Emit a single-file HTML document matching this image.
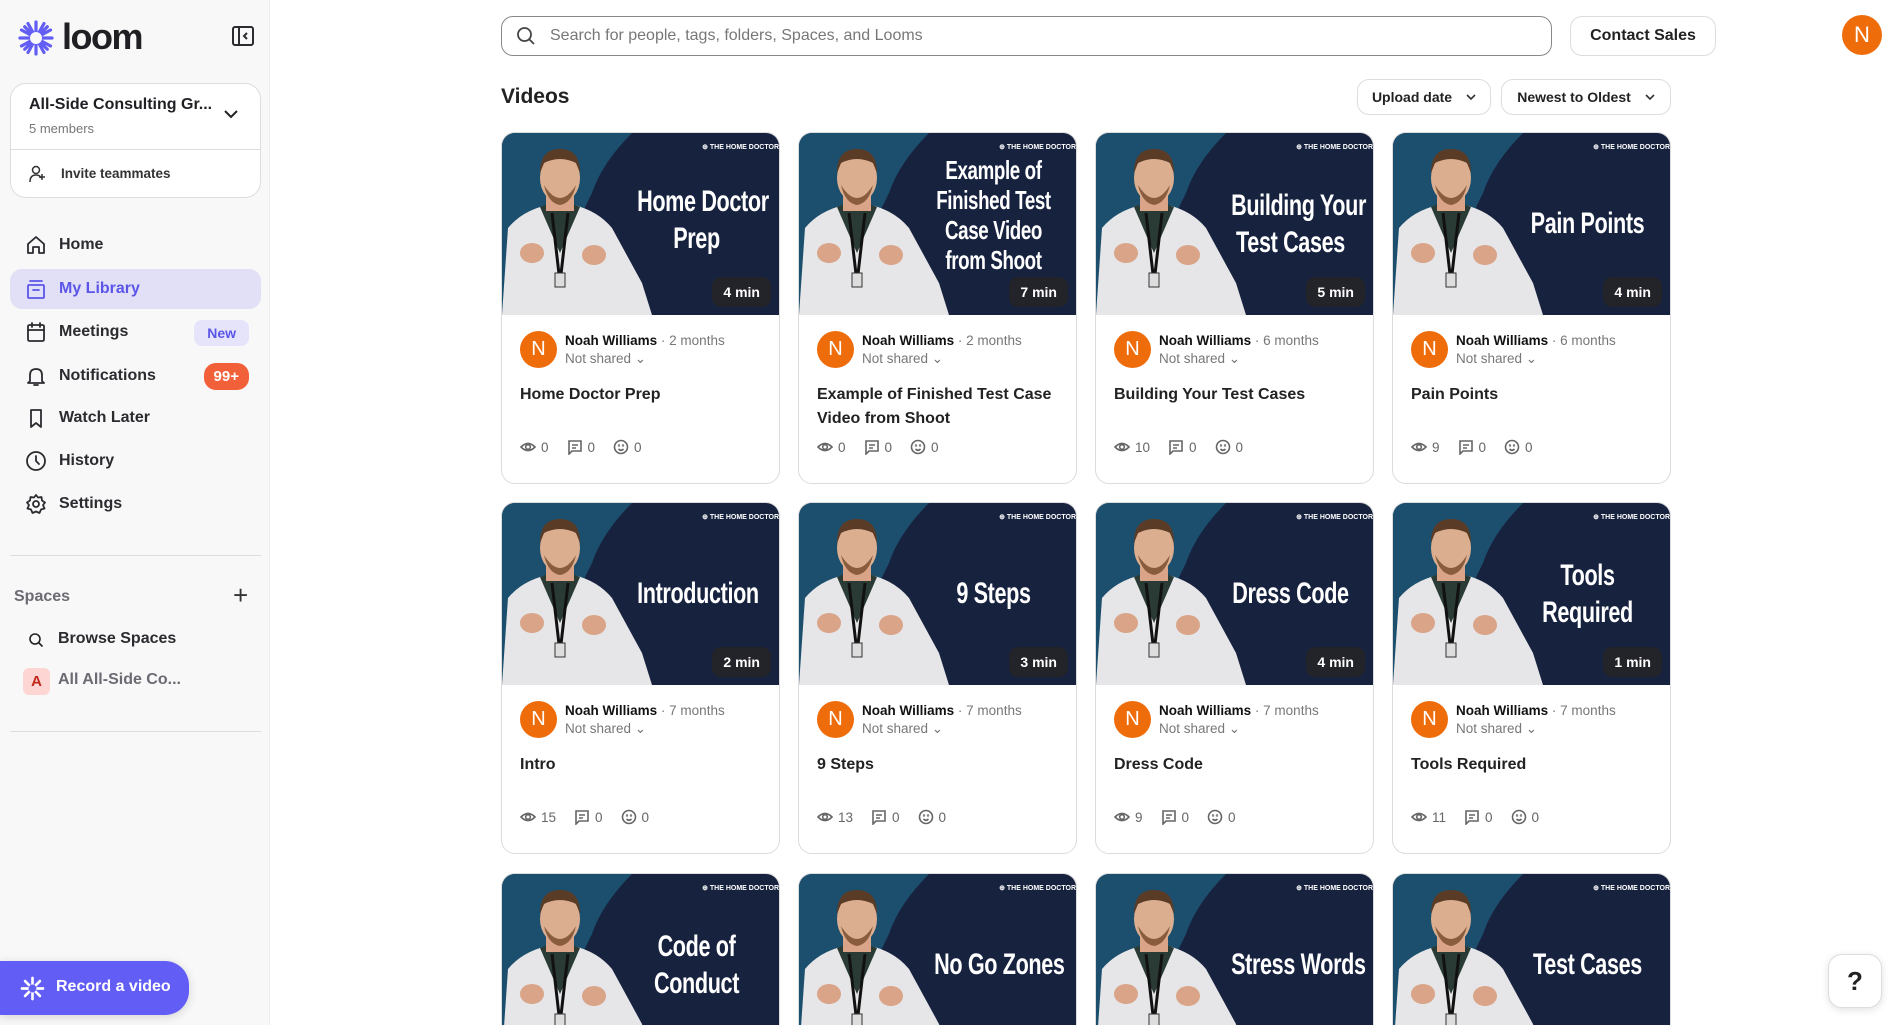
<!DOCTYPE html>
<html><head><meta charset="utf-8">
<style>
*{box-sizing:border-box;margin:0;padding:0}
html,body{width:1901px;height:1025px;overflow:hidden}
body{background:#fff;font-family:"Liberation Sans",sans-serif;color:#1f1f24}
#wrap{position:relative;width:1901px;height:1025px;overflow:hidden}
.side{position:absolute;left:0;top:0;width:270px;height:1025px;background:#f8f8f8;border-right:1px solid #eee}
.nav{position:absolute;left:10px;width:251px;height:40px;display:flex;align-items:center;padding-left:15px;font-size:16px;font-weight:bold;color:#2b2b30}
.nav svg{width:22px;height:22px;margin-right:12px;fill:none;stroke:#2b2b30;stroke-width:1.8;stroke-linecap:round;stroke-linejoin:round}
.hr{position:absolute;left:10px;width:251px;height:1px;background:#ddd}
.card{position:absolute;width:279px;height:352px;border:1px solid #dcdcdc;border-radius:14px;overflow:hidden;background:#fff}
.th{position:relative;height:182px;background:#17223f;overflow:hidden}
.th .tt{position:absolute;right:0;width:165px;text-align:center;color:#fff;font-weight:bold;font-size:30px;line-height:37px;transform:scaleX(.72);transform-origin:center;letter-spacing:-.5px;white-space:nowrap}
.th .logo{position:absolute;right:0;top:10px;color:#fff;font-size:7px;font-weight:bold;white-space:nowrap}
.badge{position:absolute;right:8px;bottom:8px;background:#23232a;color:#fff;font-weight:bold;font-size:14px;border-radius:9px;padding:7px 11px}
.meta{position:absolute;top:198px;left:18px;right:10px}
.av{position:absolute;left:0;top:0;width:37px;height:37px;border-radius:50%;background:#ef6c0b;color:#fff;font-size:20px;text-align:center;line-height:37px}
.nm{position:absolute;left:45px;top:2px;font-size:13.5px;white-space:nowrap}
.nm b{color:#111}
.nm span{color:#777}
.ns{position:absolute;left:45px;top:20px;font-size:13.5px;color:#777}
.ti{position:absolute;top:250px;left:18px;right:14px;font-size:16px;font-weight:bold;line-height:24px;color:#222}
.st{position:absolute;top:306px;left:18px;font-size:13.5px;color:#666;display:flex;gap:18px;align-items:center}
.st span{display:flex;align-items:center;gap:5px}
.st svg{width:16px;height:16px;fill:none;stroke:#666;stroke-width:1.6}
.btn{position:absolute;border:1px solid #ddd;border-radius:12px;background:#fff;font-weight:bold;color:#222;display:flex;align-items:center;justify-content:center}
</style></head><body>
<div id="wrap">
<svg width="0" height="0" style="position:absolute">
<defs>
<symbol id="person" viewBox="0 0 279 182">
<path d="M0 0H130Q100 30 90 60L30 182H0Z" fill="#1d5775" opacity=".85"/>
<path d="M0 182L6 95Q20 78 45 72L58 80L72 72Q96 78 110 95L140 150L150 182Z" fill="#e6e6e8"/>
<path d="M38 74L58 120L78 74L68 70H48Z" fill="#2a3a34"/>
<path d="M50 80L58 150L66 80" fill="none" stroke="#111" stroke-width="3"/>
<rect x="53" y="140" width="10" height="14" fill="#ddd" stroke="#333"/>
<rect x="44" y="62" width="28" height="16" fill="#d9a487"/>
<ellipse cx="58" cy="45" rx="20" ry="25" fill="#dcae90"/>
<path d="M38 40Q38 16 58 16Q78 16 78 40L74 30Q58 22 42 30Z" fill="#5a3b26"/>
<path d="M42 52Q58 78 74 52Q70 70 58 72Q46 70 42 52Z" fill="#8a5c3e"/>
<ellipse cx="30" cy="120" rx="12" ry="10" fill="#d9a487"/>
<ellipse cx="92" cy="122" rx="12" ry="10" fill="#d9a487"/>
</symbol>
<symbol id="eye" viewBox="0 0 16 16"><path d="M1 8Q8 1 15 8Q8 15 1 8Z"/><circle cx="8" cy="8" r="2.3"/></symbol>
<symbol id="cm" viewBox="0 0 16 16"><path d="M2 2H14V12H5L2 15Z"/><path d="M5 6H11M5 9H9"/></symbol>
<symbol id="sm" viewBox="0 0 16 16"><circle cx="8" cy="8" r="6.5"/><path d="M5.5 10Q8 12.5 10.5 10"/><circle cx="6" cy="6.5" r=".4"/><circle cx="10" cy="6.5" r=".4"/></symbol>
</defs></svg>

<div class="side">
<svg style="position:absolute;left:17px;top:19px" width="38" height="38" viewBox="0 0 38 38"><g stroke="#625df5" stroke-linecap="round"><path d="M19 3V35M3 19H35M7.7 7.7L30.3 30.3M30.3 7.7L7.7 30.3M11 4.5L27 33.5M27 4.5L11 33.5M4.5 11L33.5 27M33.5 11L4.5 27" stroke-width="3.2"/></g><circle cx="19" cy="19" r="6" fill="#f8f8f8"/></svg>
<div style="position:absolute;left:62px;top:16px;font-size:36px;font-weight:bold;letter-spacing:-1.5px;color:#1f1f24">loom</div>
<svg style="position:absolute;left:232px;top:26px" width="22" height="20" viewBox="0 0 22 20" fill="none" stroke="#2b2b30" stroke-width="2"><rect x="1" y="1" width="20" height="18" rx="2"/><path d="M7 1V19M15 7L12 10L15 13"/></svg>
<div style="position:absolute;left:10px;top:83px;width:251px;height:115px;border:1px solid #ddd;border-radius:16px;background:#fff">
<div style="position:absolute;left:18px;top:12px;font-size:16px;font-weight:bold">All-Side Consulting Gr...</div>
<div style="position:absolute;left:18px;top:37px;font-size:13px;color:#777">5 members</div>
<svg style="position:absolute;left:212px;top:24px" width="16" height="12" viewBox="0 0 16 12" fill="none" stroke="#222" stroke-width="2"><path d="M2 3L8 9L14 3"/></svg>
<div style="position:absolute;left:0;right:0;top:65px;height:1px;background:#ddd"></div>
<svg style="position:absolute;left:18px;top:81px" width="18" height="18" viewBox="0 0 18 18" fill="none" stroke="#333" stroke-width="1.5"><circle cx="7" cy="5" r="3.5"/><path d="M1 17Q1 10 7 10Q11 10 12 13M13 9V15M10 12H16"/></svg>
<div style="position:absolute;left:50px;top:82px;font-size:13.5px;font-weight:bold;color:#333">Invite teammates</div>
</div>
<div class="nav" style="top:225px"><svg viewBox="0 0 22 22"><path d="M3 10L11 3L19 10V19H14V13H8V19H3Z"/></svg>Home</div>
<div class="nav" style="top:269px;background:#e2e0f6;border-radius:12px;color:#5b56e8"><svg viewBox="0 0 22 22" style="stroke:#5b56e8"><path d="M5 3H17"/><rect x="3" y="7" width="16" height="13" rx="1"/><path d="M8 12H14"/></svg>My Library</div>
<div class="nav" style="top:312px"><svg viewBox="0 0 22 22"><rect x="3" y="4" width="16" height="16" rx="1.5"/><path d="M3 9H19M7 2V6M15 2V6"/></svg>Meetings<span style="position:absolute;right:12px;top:8px;background:#e5e4fb;color:#5b56e8;font-size:14px;border-radius:8px;padding:5px 13px">New</span></div>
<div class="nav" style="top:356px"><svg viewBox="0 0 22 22"><path d="M5 16V10Q5 4 11 4Q17 4 17 10V16L19 18H3Z M9 20H13"/></svg>Notifications<span style="position:absolute;right:12px;top:7px;background:#f2603a;color:#fff;font-size:15px;border-radius:12px;padding:5px 10px">99+</span></div>
<div class="nav" style="top:398px"><svg viewBox="0 0 22 22"><path d="M6 3H16V20L11 16L6 20Z"/></svg>Watch Later</div>
<div class="nav" style="top:441px"><svg viewBox="0 0 22 22"><circle cx="11" cy="11" r="9"/><path d="M11 6V11L14 14"/></svg>History</div>
<div class="nav" style="top:484px"><svg viewBox="0 0 22 22"><circle cx="11" cy="11" r="3"/><path d="M11 2L13 4.5L16.5 4L17 7.5L20 9.5L18 12L19.5 15.5L16 16.5L14.5 20L11 18.5L7.5 20L6 16.5L2.5 15.5L4 12L2 9.5L5 7.5L5.5 4L9 4.5Z"/></svg>Settings</div>
<div class="hr" style="top:555px"></div>
<div style="position:absolute;left:14px;top:588px;font-size:16px;font-weight:bold;color:#6b6b73">Spaces</div>
<div style="position:absolute;left:233px;top:580px;font-size:26px;color:#333;font-weight:300">+</div>
<svg style="position:absolute;left:28px;top:632px" width="16" height="16" viewBox="0 0 16 16" fill="none" stroke="#222" stroke-width="1.6"><circle cx="7" cy="7" r="5"/><path d="M11 11L14.5 14.5"/></svg>
<div style="position:absolute;left:58px;top:630px;font-size:16px;font-weight:bold;color:#2b2b30">Browse Spaces</div>
<div style="position:absolute;left:23px;top:668px;width:27px;height:27px;border-radius:6px;background:#fdd5d2;color:#c0281c;font-weight:bold;text-align:center;line-height:27px;font-size:15px">A</div>
<div style="position:absolute;left:58px;top:671px;font-size:16px;font-weight:bold;color:#6b6b73">All All-Side Co...</div>
<div class="hr" style="top:731px"></div>
<div style="position:absolute;left:0;top:961px;width:189px;height:54px;background:#625df5;border-radius:0 24px 24px 0;box-shadow:0 2px 10px rgba(0,0,0,.15)">
<svg style="position:absolute;left:20px;top:15px" width="25" height="25" viewBox="0 0 38 38"><g stroke="#fff" stroke-width="4" stroke-linecap="round"><path d="M19 3V35M3 19H35M7.7 7.7L30.3 30.3M30.3 7.7L7.7 30.3"/></g><circle cx="19" cy="19" r="6" fill="#625df5"/></svg>
<div style="position:absolute;left:56px;top:17px;color:#fff;font-weight:bold;font-size:16px">Record a video</div>
</div>
</div>

<div style="position:absolute;left:501px;top:16px;width:1051px;height:40px;border:1.5px solid #888;border-radius:12px">
<svg style="position:absolute;left:14px;top:9px" width="20" height="20" viewBox="0 0 20 20" fill="none" stroke="#444" stroke-width="1.8"><circle cx="8.5" cy="8.5" r="6.5"/><path d="M13.5 13.5L18 18"/></svg>
<div style="position:absolute;left:48px;top:10px;font-size:16px;color:#777">Search for people, tags, folders, Spaces, and Looms</div>
</div>
<div class="btn" style="left:1570px;top:16px;width:146px;height:40px;font-size:16px">Contact Sales</div>
<div style="position:absolute;left:1842px;top:15px;width:40px;height:40px;border-radius:50%;background:#ef6c0b;color:#fff;font-size:22px;text-align:center;line-height:40px">N</div>
<div style="position:absolute;left:501px;top:85px;font-size:21px;font-weight:bold;color:#222">Videos</div>
<div class="btn" style="left:1357px;top:79px;width:134px;height:36px;font-size:14px">Upload date <svg style="margin-left:14px" width="10" height="7" viewBox="0 0 10 7" fill="none" stroke="#333" stroke-width="1.6"><path d="M1 1L5 5L9 1"/></svg></div>
<div class="btn" style="left:1501px;top:79px;width:170px;height:36px;font-size:14px">Newest to Oldest <svg style="margin-left:14px" width="10" height="7" viewBox="0 0 10 7" fill="none" stroke="#333" stroke-width="1.6"><path d="M1 1L5 5L9 1"/></svg></div>

<div class="card" style="left:501px;top:132px"><div class="th"><svg width="279" height="182"><use href="#person"/></svg><div class="logo">⊕ THE HOME DOCTOR</div><div class="tt" style="top:50px">Home Doctor<br>Prep</div><div class="badge">4 min</div></div>
<div class="meta"><div class="av">N</div><div class="nm"><b>Noah Williams</b> <span>· 2 months</span></div><div class="ns">Not shared ⌄</div></div><div class="ti">Home Doctor Prep</div>
<div class="st"><span><svg><use href="#eye"/></svg>0</span><span><svg><use href="#cm"/></svg>0</span><span><svg><use href="#sm"/></svg>0</span></div></div>
<div class="card" style="left:798px;top:132px"><div class="th"><svg width="279" height="182"><use href="#person"/></svg><div class="logo">⊕ THE HOME DOCTOR</div><div class="tt" style="top:22px;line-height:30px;font-size:26px">Example of<br>Finished Test<br>Case Video<br>from Shoot</div><div class="badge">7 min</div></div>
<div class="meta"><div class="av">N</div><div class="nm"><b>Noah Williams</b> <span>· 2 months</span></div><div class="ns">Not shared ⌄</div></div><div class="ti">Example of Finished Test Case Video from Shoot</div>
<div class="st"><span><svg><use href="#eye"/></svg>0</span><span><svg><use href="#cm"/></svg>0</span><span><svg><use href="#sm"/></svg>0</span></div></div>
<div class="card" style="left:1095px;top:132px"><div class="th"><svg width="279" height="182"><use href="#person"/></svg><div class="logo">⊕ THE HOME DOCTOR</div><div class="tt" style="top:54px">Building Your<br>Test Cases</div><div class="badge">5 min</div></div>
<div class="meta"><div class="av">N</div><div class="nm"><b>Noah Williams</b> <span>· 6 months</span></div><div class="ns">Not shared ⌄</div></div><div class="ti">Building Your Test Cases</div>
<div class="st"><span><svg><use href="#eye"/></svg>10</span><span><svg><use href="#cm"/></svg>0</span><span><svg><use href="#sm"/></svg>0</span></div></div>
<div class="card" style="left:1392px;top:132px"><div class="th"><svg width="279" height="182"><use href="#person"/></svg><div class="logo">⊕ THE HOME DOCTOR</div><div class="tt" style="top:72px">Pain Points</div><div class="badge">4 min</div></div>
<div class="meta"><div class="av">N</div><div class="nm"><b>Noah Williams</b> <span>· 6 months</span></div><div class="ns">Not shared ⌄</div></div><div class="ti">Pain Points</div>
<div class="st"><span><svg><use href="#eye"/></svg>9</span><span><svg><use href="#cm"/></svg>0</span><span><svg><use href="#sm"/></svg>0</span></div></div>

<div class="card" style="left:501px;top:502px"><div class="th"><svg width="279" height="182"><use href="#person"/></svg><div class="logo">⊕ THE HOME DOCTOR</div><div class="tt" style="top:72px">Introduction</div><div class="badge">2 min</div></div>
<div class="meta"><div class="av">N</div><div class="nm"><b>Noah Williams</b> <span>· 7 months</span></div><div class="ns">Not shared ⌄</div></div><div class="ti">Intro</div>
<div class="st"><span><svg><use href="#eye"/></svg>15</span><span><svg><use href="#cm"/></svg>0</span><span><svg><use href="#sm"/></svg>0</span></div></div>
<div class="card" style="left:798px;top:502px"><div class="th"><svg width="279" height="182"><use href="#person"/></svg><div class="logo">⊕ THE HOME DOCTOR</div><div class="tt" style="top:72px">9 Steps</div><div class="badge">3 min</div></div>
<div class="meta"><div class="av">N</div><div class="nm"><b>Noah Williams</b> <span>· 7 months</span></div><div class="ns">Not shared ⌄</div></div><div class="ti">9 Steps</div>
<div class="st"><span><svg><use href="#eye"/></svg>13</span><span><svg><use href="#cm"/></svg>0</span><span><svg><use href="#sm"/></svg>0</span></div></div>
<div class="card" style="left:1095px;top:502px"><div class="th"><svg width="279" height="182"><use href="#person"/></svg><div class="logo">⊕ THE HOME DOCTOR</div><div class="tt" style="top:72px">Dress Code</div><div class="badge">4 min</div></div>
<div class="meta"><div class="av">N</div><div class="nm"><b>Noah Williams</b> <span>· 7 months</span></div><div class="ns">Not shared ⌄</div></div><div class="ti">Dress Code</div>
<div class="st"><span><svg><use href="#eye"/></svg>9</span><span><svg><use href="#cm"/></svg>0</span><span><svg><use href="#sm"/></svg>0</span></div></div>
<div class="card" style="left:1392px;top:502px"><div class="th"><svg width="279" height="182"><use href="#person"/></svg><div class="logo">⊕ THE HOME DOCTOR</div><div class="tt" style="top:54px">Tools<br>Required</div><div class="badge">1 min</div></div>
<div class="meta"><div class="av">N</div><div class="nm"><b>Noah Williams</b> <span>· 7 months</span></div><div class="ns">Not shared ⌄</div></div><div class="ti">Tools Required</div>
<div class="st"><span><svg><use href="#eye"/></svg>11</span><span><svg><use href="#cm"/></svg>0</span><span><svg><use href="#sm"/></svg>0</span></div></div>

<div class="card" style="left:501px;top:873px"><div class="th"><svg width="279" height="182"><use href="#person"/></svg><div class="logo">⊕ THE HOME DOCTOR</div><div class="tt" style="top:54px">Code of<br>Conduct</div></div></div>
<div class="card" style="left:798px;top:873px"><div class="th"><svg width="279" height="182"><use href="#person"/></svg><div class="logo">⊕ THE HOME DOCTOR</div><div class="tt" style="top:72px">No Go Zones</div></div></div>
<div class="card" style="left:1095px;top:873px"><div class="th"><svg width="279" height="182"><use href="#person"/></svg><div class="logo">⊕ THE HOME DOCTOR</div><div class="tt" style="top:72px">Stress Words</div></div></div>
<div class="card" style="left:1392px;top:873px"><div class="th"><svg width="279" height="182"><use href="#person"/></svg><div class="logo">⊕ THE HOME DOCTOR</div><div class="tt" style="top:72px">Test Cases</div></div></div>

<div style="position:absolute;left:1828px;top:954px;width:54px;height:54px;border-radius:14px;background:#fff;border:1px solid #ddd;box-shadow:0 2px 8px rgba(0,0,0,.12);text-align:center;line-height:52px;font-size:26px;font-weight:bold;color:#222">?</div>
</div>
</body></html>
